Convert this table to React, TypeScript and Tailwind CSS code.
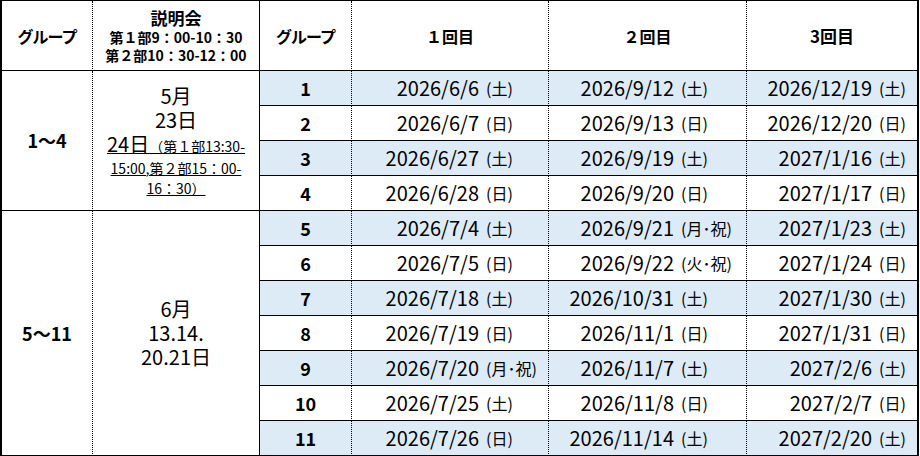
import React from "react";

type DateCell = [string, string];
type Row = [number, DateCell, DateCell, DateCell];

const rows: Row[] = [
  [1, ["2026/6/6", "土"], ["2026/9/12", "土"], ["2026/12/19", "土"]],
  [2, ["2026/6/7", "日"], ["2026/9/13", "日"], ["2026/12/20", "日"]],
  [3, ["2026/6/27", "土"], ["2026/9/19", "土"], ["2027/1/16", "土"]],
  [4, ["2026/6/28", "日"], ["2026/9/20", "日"], ["2027/1/17", "日"]],
  [5, ["2026/7/4", "土"], ["2026/9/21", "月･祝"], ["2027/1/23", "土"]],
  [6, ["2026/7/5", "日"], ["2026/9/22", "火･祝"], ["2027/1/24", "日"]],
  [7, ["2026/7/18", "土"], ["2026/10/31", "土"], ["2027/1/30", "土"]],
  [8, ["2026/7/19", "日"], ["2026/11/1", "日"], ["2027/1/31", "日"]],
  [9, ["2026/7/20", "月･祝"], ["2026/11/7", "土"], ["2027/2/6", "土"]],
  [10, ["2026/7/25", "土"], ["2026/11/8", "日"], ["2027/2/7", "日"]],
  [11, ["2026/7/26", "日"], ["2026/11/14", "土"], ["2027/2/20", "土"]],
];

const dotR = "border-b border-r border-black [border-right-style:dotted]";
const solidR = "border-b border-r border-black";

function DateBox({ d, suffixW, dotted, blue }: { d: DateCell; suffixW: string; dotted: boolean; blue: string }) {
  return (
    <div className={`flex items-center justify-end ${blue} ${dotted ? dotR : solidR}`}>
      <span className="text-[20px] leading-none whitespace-nowrap">{d[0]}</span>
      <span className={`${suffixW} shrink-0 pl-[7px] text-[16px] leading-none whitespace-nowrap`}>
        ({d[1]})
      </span>
    </div>
  );
}

export default function App() {
  return (
    <div className="bg-white w-[920px] h-[456px] font-['Noto_Sans_CJK_JP',sans-serif] text-black">
      <div className="grid w-fit grid-cols-[91px_167px_92px_197px_198px_171px] grid-rows-[70px_repeat(11,35px)] border-l-2 border-t border-r border-black">
        {/* header */}
        <div className={`flex items-center justify-center text-[16px] tracking-[-1px] font-bold ${dotR}`}>グループ</div>
        <div className={`flex flex-col items-center justify-center font-bold ${solidR}`}>
          <div className="text-[17px] leading-[21px]">説明会</div>
          <div className="text-[14px] leading-[18px] whitespace-nowrap">第１部9：00-10：30</div>
          <div className="text-[14px] leading-[18px] whitespace-nowrap">第２部10：30-12：00</div>
        </div>
        <div className={`flex items-center justify-center text-[16px] tracking-[-1px] font-bold ${dotR}`}>グループ</div>
        <div className={`flex items-center justify-center text-[16px] font-bold ${dotR}`}>１回目</div>
        <div className={`flex items-center justify-center text-[16px] font-bold ${dotR}`}>２回目</div>
        <div className={`flex items-center justify-center text-[17px] font-bold ${solidR}`}>3回目</div>

        {rows.map((r, i) => {
          const blue = r[0] % 2 === 1 ? "bg-[#DDEBF7]" : "bg-white";
          return (
            <React.Fragment key={r[0]}>
              {i === 0 && (
                <>
                  <div className={`row-span-4 flex items-center justify-center text-[18px] font-bold ${dotR}`}>
                    1～4
                  </div>
                  <div className={`row-span-4 flex flex-col items-center justify-center text-[20px] ${solidR}`}>
                    <div className="leading-[24px]">5月</div>
                    <div className="leading-[24px]">23日</div>
                    <div className="leading-[24px] underline decoration-1 whitespace-nowrap">
                      24日<span className="text-[14px]">（第１部13:30-</span>
                    </div>
                    <div className="text-[14px] leading-[21px] underline decoration-1 whitespace-nowrap">
                      15:00,第２部15：00-
                    </div>
                    <div className="text-[14px] leading-[19px] underline decoration-1 whitespace-nowrap">
                      16：30）
                    </div>
                  </div>
                </>
              )}
              {i === 4 && (
                <>
                  <div className={`row-span-7 flex items-center justify-center text-[18px] font-bold ${dotR}`}>
                    5～11
                  </div>
                  <div className={`row-span-7 flex flex-col items-center justify-center text-[20px] ${solidR}`}>
                    <div className="leading-[24px]">6月</div>
                    <div className="leading-[24px]">13.14.</div>
                    <div className="leading-[24px]">20.21日</div>
                  </div>
                </>
              )}
              <div className={`col-start-3 flex items-center justify-center text-[18px] font-bold ${blue} ${dotR}`}>
                {r[0]}
              </div>
              <DateBox d={r[1]} suffixW="w-[69px]" dotted blue={blue} />
              <DateBox d={r[2]} suffixW="w-[72px]" dotted blue={blue} />
              <DateBox d={r[3]} suffixW="w-[45px]" dotted={false} blue={blue} />
            </React.Fragment>
          );
        })}
      </div>
    </div>
  );
}
